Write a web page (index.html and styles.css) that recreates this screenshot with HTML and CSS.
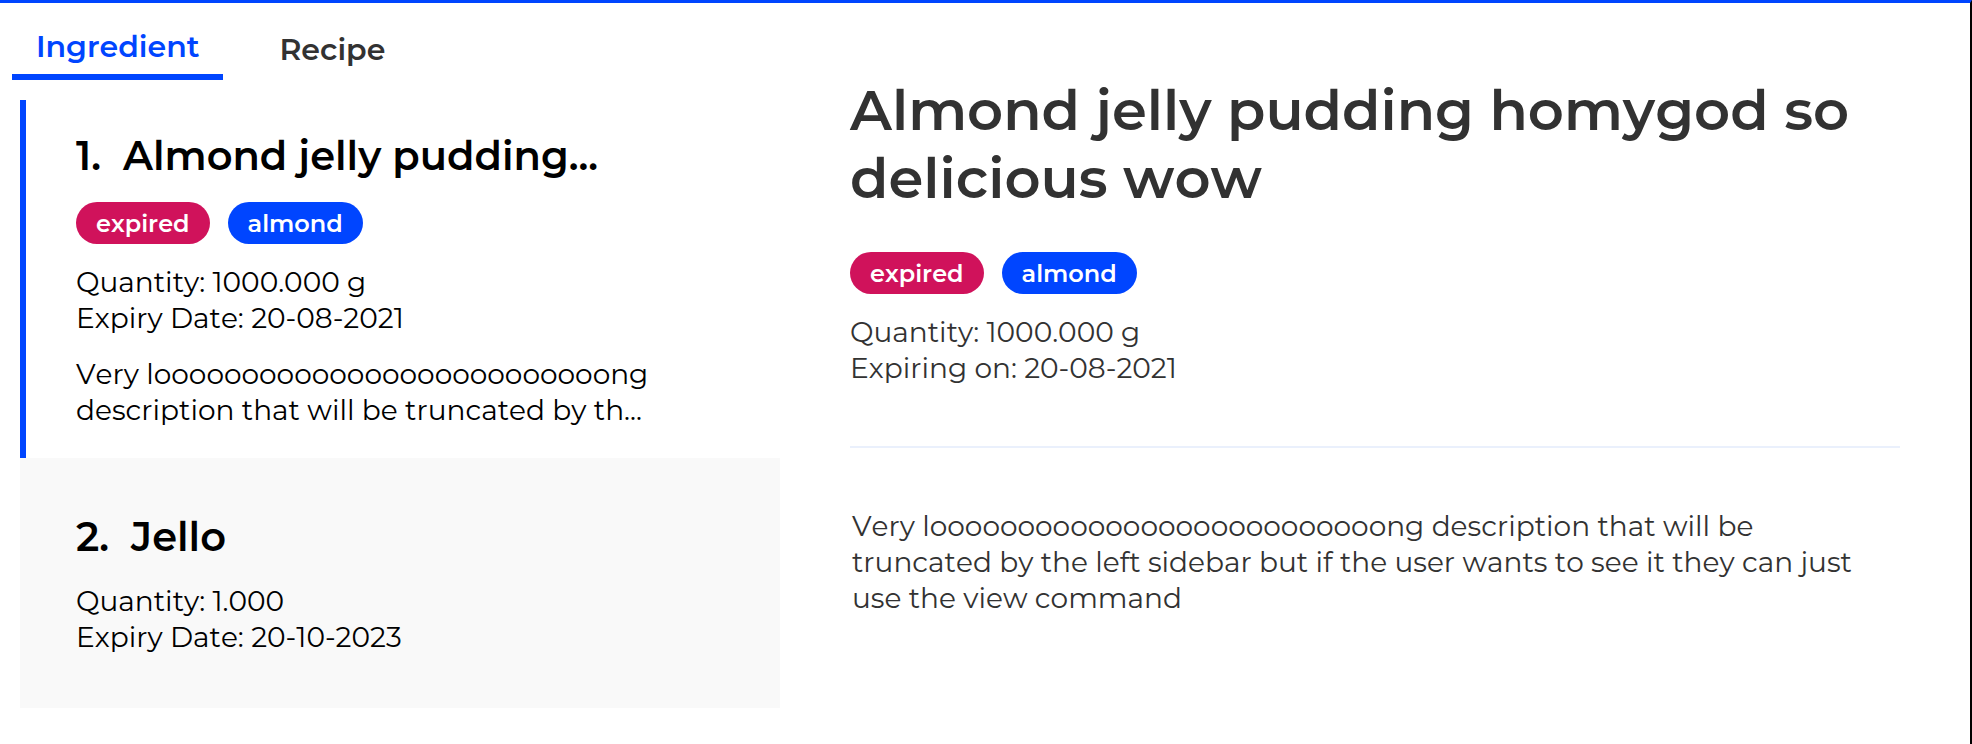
FILE: index.html
```html
<!DOCTYPE html>
<html lang="en">
<head>
<meta charset="utf-8">
<title>Ingredients</title>
<link rel="stylesheet" href="styles.css">
</head>
<body>
<div class="app">
  <section class="sidebar">
    <nav class="tabs">
      <button class="tab tab-active" type="button">Ingredient</button>
      <button class="tab" type="button">Recipe</button>
    </nav>
    <article class="card card-selected">
      <h2 class="card-title"><span>1.</span><span>Almond jelly pudding...</span></h2>
      <div class="tags"><span class="tag tag-expired">expired</span><span class="tag">almond</span></div>
      <div class="facts">
        <p>Quantity: 1000.000 g</p>
        <p>Expiry Date: 20-08-2021</p>
      </div>
      <p class="summary">Very loooooooooooooooooooooooooong description that will be truncated by th...</p>
    </article>
    <article class="card card-plain">
      <h2 class="card-title"><span>2.</span><span>Jello</span></h2>
      <div class="facts">
        <p>Quantity: 1.000</p>
        <p>Expiry Date: 20-10-2023</p>
      </div>
    </article>
  </section>
  <main class="detail">
    <h1 class="detail-title">Almond jelly pudding homygod so delicious wow</h1>
    <div class="tags"><span class="tag tag-expired">expired</span><span class="tag">almond</span></div>
    <div class="facts">
      <p>Quantity: 1000.000 g</p>
      <p>Expiring on: 20-08-2021</p>
    </div>
    <hr class="divider">
    <p class="description">Very loooooooooooooooooooooooooong description that will be truncated by the left sidebar but if the user wants to see it they can just use the view command</p>
  </main>
</div>
</body>
</html>
```
FILE: styles.css
```css
* { box-sizing: border-box; }
body {
  margin: 0;
  font-family: Montserrat, Inter, "Open Sans", sans-serif;
  font-size: 28px;
  font-kerning: none;
  line-height: 36px;
  color: #000;
  background: #fff;
}
h1, h2, p { margin: 0; }
.app {
  display: grid;
  grid-template-columns: 780fr 1190fr;
  min-height: 100vh;
  border-top: 3px solid #0045ff;
  border-right: 2px solid #000;
}
.tabs {
  display: flex;
  align-items: center;
  gap: 32px;
  padding: 17px 12px 20px;
}
.tab {
  padding: 9px 24px;
  border: 0;
  background: none;
  font: inherit;
  font-size: 30px;
  font-weight: 600;
  color: #323232;
}
.tab-active {
  color: #0045ff;
  border-bottom: 6px solid #0045ff;
}
.card {
  margin-left: 20px;
  padding: 32px 56px 30px;
}
.card-selected {
  padding-left: 50px;
  border-left: 6px solid #0045ff;
}
.card-plain {
  padding-top: 55px;
  padding-bottom: 53px;
  background: #f9f9f9;
}
.card-title {
  display: flex;
  gap: 22px;
  font-size: 40px;
  line-height: 48px;
  font-weight: 600;
}
.tags {
  display: flex;
  gap: 18px;
  margin-top: 22px;
}
.tag {
  padding: 2px 20px 0;
  border-radius: 21px;
  background: #0045ff;
  color: #fff;
  font-size: 24px;
  line-height: 40px;
  font-weight: 600;
}
.tag-expired { background: #d0125b; }
.facts { margin-top: 20px; }
.card-plain .facts { margin-top: 22px; }
.summary { margin-top: 20px; }
.detail {
  padding: 73px 70px 40px;
  color: #323232;
}
.detail-title {
  font-size: 56px;
  line-height: 68px;
  font-weight: 600;
}
.detail .tags { margin-top: 40px; }
.divider {
  height: 2px;
  margin: 60px 0;
  border: 0;
  background: #eaf0fc;
}
.description { padding: 0 20px 0 2px; }
```
